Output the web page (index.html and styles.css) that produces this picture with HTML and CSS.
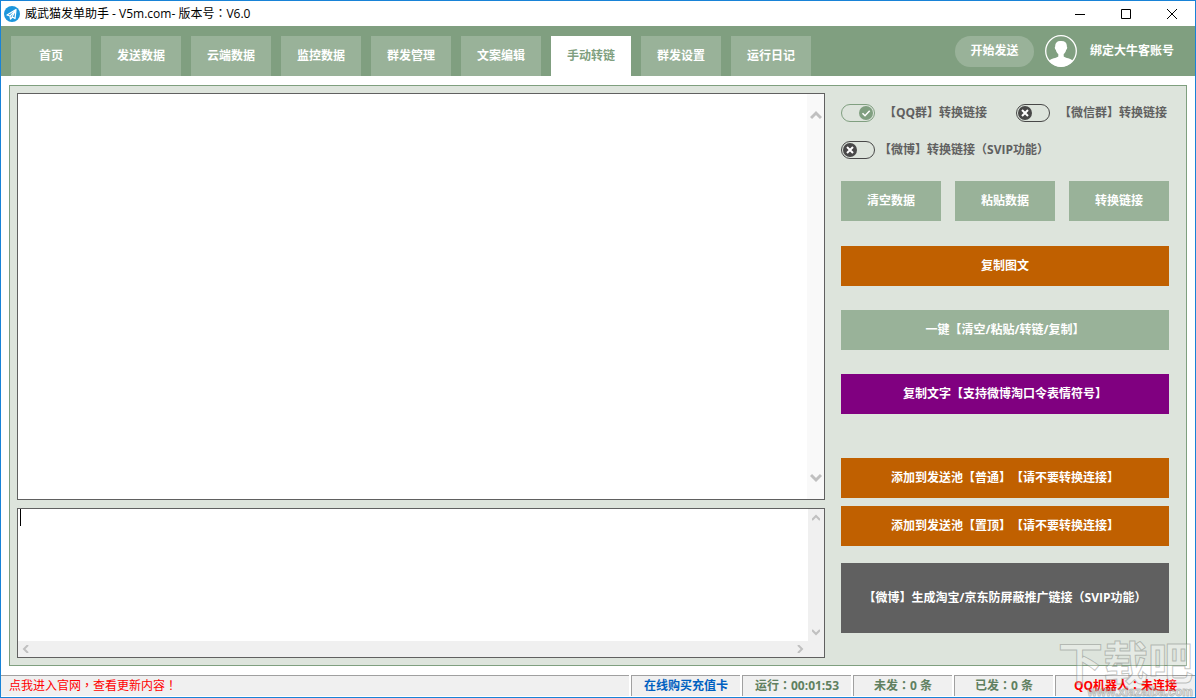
FILE: index.html
```html
<!DOCTYPE html>
<html lang="zh-CN">
<head>
<meta charset="utf-8">
<title>威武猫发单助手</title>
<link rel="stylesheet" href="styles.css">
</head>
<body>
<div class="window">
  <header class="titlebar">
    <svg class="app-icon" viewBox="0 0 16 16" aria-hidden="true">
      <circle cx="8" cy="8" r="8" fill="#1c96dc"/>
      <path d="M3 9 12 3.5 11 12.5 8.5 11 6.5 13 6 10Z" fill="none" stroke="#fff" stroke-width="1.3" stroke-linejoin="round"/>
      <path d="M6 10 11.5 4.5 8 11" fill="none" stroke="#fff" stroke-width="1.2"/>
    </svg>
    <h1 class="title">威武猫发单助手 - V5m.com- 版本号<span class="mid" lang="zh-TW">：</span>V6.0</h1>
    <div class="controls">
      <button class="control" aria-label="最小化"><svg viewBox="0 0 12 12"><path d="M1 6.5h10" /></svg></button>
      <button class="control" aria-label="最大化"><svg viewBox="0 0 12 12"><path d="M1.5 1.5h9v9h-9z" /></svg></button>
      <button class="control" aria-label="关闭"><svg viewBox="0 0 12 12"><path d="M1 1l10 10M11 1 1 11" /></svg></button>
    </div>
  </header>

  <div class="toolbar">
    <nav class="tabs" role="tablist">
      <button class="tab" role="tab">首页</button>
      <button class="tab" role="tab">发送数据</button>
      <button class="tab" role="tab">云端数据</button>
      <button class="tab" role="tab">监控数据</button>
      <button class="tab" role="tab">群发管理</button>
      <button class="tab" role="tab">文案编辑</button>
      <button class="tab tab-active" role="tab" aria-selected="true">手动转链</button>
      <button class="tab" role="tab">群发设置</button>
      <button class="tab" role="tab">运行日记</button>
    </nav>
    <div class="account">
      <button class="start">开始发送</button>
      <svg class="avatar" viewBox="0 0 32 32" aria-hidden="true">
        <circle cx="16" cy="16" r="15.3" fill="none" stroke="#fff" stroke-width="1.3"/>
        <path d="M16 6C12.300 5.500 10 7.800 10.200 11.500 9.400 12 9.900 14.500 10.900 14.900 11.300 17 12.400 18.300 13.300 19V21.500C11.500 23.300 6 23 4.200 26 10 33.500 22 33.500 27.800 26 26 23 20.500 23.300 18.700 21.500V19C19.600 18.300 20.700 17 21.100 14.900 22.100 14.500 22.600 12 21.800 11.500 22.200 8 20 5.800 16 6Z" fill="#fff"/>
      </svg>
      <a class="bind" href="#">绑定大牛客账号</a>
    </div>
  </div>

  <main class="panel">
    <div class="editors">
      <div class="editor editor-main">
        <textarea class="editor-text" aria-label="转链内容"></textarea>
        <div class="scroll scroll-light">
          <button class="arrow" aria-label="向上"><svg class="chev" viewBox="0 0 12 12"><path d="M1 9 6 4l5 5"/></svg></button>
          <button class="arrow" aria-label="向下"><svg class="chev" viewBox="0 0 12 12"><path d="M1 3l5 5 5-5"/></svg></button>
        </div>
      </div>
      <div class="editor editor-sub">
        <textarea class="editor-text" aria-label="转换结果"></textarea>
        <span class="caret"></span>
        <div class="scroll">
          <button class="arrow" aria-label="向上"><svg class="chev-small" viewBox="0 0 8 8"><path d="M0 6l4-4 4 4"/></svg></button>
          <button class="arrow" aria-label="向下"><svg class="chev-small" viewBox="0 0 8 8"><path d="M0 2l4 4 4-4"/></svg></button>
        </div>
        <div class="scroll-h">
          <button class="arrow" aria-label="向左"><svg class="chev-small" viewBox="0 0 8 8"><path d="M6 0 2 4l4 4"/></svg></button>
          <button class="arrow" aria-label="向右"><svg class="chev-small" viewBox="0 0 8 8"><path d="M2 0l4 4-4 4"/></svg></button>
        </div>
        <div class="corner"></div>
      </div>
    </div>

    <aside class="side">
      <div class="options">
        <div class="option-row">
          <label class="option option-wide">
            <span class="switch switch-on">
              <input class="switch-box" type="checkbox" checked>
              <svg class="knob" viewBox="0 0 14 14"><circle cx="7" cy="7" r="7"/><path d="M3.500 7.200 6 9.700l4.700-5"/></svg>
            </span>【QQ群】转换链接
          </label>
          <label class="option option-wide">
            <span class="switch">
              <input class="switch-box" type="checkbox">
              <svg class="knob" viewBox="0 0 14 14"><circle cx="7" cy="7" r="7"/><path class="cross" d="M4 4l6 6M10 4l-6 6"/></svg>
            </span>【微信群】转换链接
          </label>
        </div>
        <div class="option-row">
          <label class="option">
            <span class="switch">
              <input class="switch-box" type="checkbox">
              <svg class="knob" viewBox="0 0 14 14"><circle cx="7" cy="7" r="7"/><path class="cross" d="M4 4l6 6M10 4l-6 6"/></svg>
            </span>
            <span>【微博】转换链接<span class="mid" lang="zh-TW">（</span>SVIP功能<span class="mid" lang="zh-TW">）</span></span>
          </label>
        </div>
      </div>
      <div class="trio">
        <button class="btn">清空数据</button>
        <button class="btn">粘贴数据</button>
        <button class="btn">转换链接</button>
      </div>
      <div class="copying">
        <button class="btn btn-orange">复制图文</button>
        <button class="btn">一键【清空/粘贴/转链/复制】</button>
        <button class="btn btn-purple">复制文字【支持微博淘口令表情符号】</button>
      </div>
      <div class="pool">
        <button class="btn btn-orange">添加到发送池【普通】【请不要转换连接】</button>
        <button class="btn btn-orange">添加到发送池【置顶】【请不要转换连接】</button>
      </div>
      <button class="btn btn-tall">【微博】生成淘宝/京东防屏蔽推广链接<span class="mid" lang="zh-TW">（</span>SVIP功能<span class="mid" lang="zh-TW">）</span></button>
    </aside>
  </main>

  <footer class="status">
    <a class="cell cell-news" href="#">点我进入官网<span class="mid" lang="zh-TW">，</span>查看更新内容<span class="mid" lang="zh-TW">！</span></a>
    <a class="cell cell-buy" href="#">在线购买充值卡</a>
    <span class="cell">运行<span class="mid" lang="zh-TW">：</span>00:01:53</span>
    <span class="cell cell-count">未发<span class="mid" lang="zh-TW">：</span>0 条</span>
    <span class="cell cell-count">已发<span class="mid" lang="zh-TW">：</span>0 条</span>
    <span class="cell cell-robot">QQ机器人<span class="mid" lang="zh-TW">：</span>未连接</span>
  </footer>

  <div class="watermark" aria-hidden="true">
    <span class="mark-name">下载吧</span>
    <span class="mark-url">www.xiazaiba.com</span>
  </div>
</div>
</body>
</html>
```
FILE: styles.css
```css
* {
  box-sizing: border-box;
}

body {
  margin: 0;
  font-family: "Open Sans", "Noto Sans CJK SC", sans-serif;
  font-size: 12px;
  line-height: 16px;
  color: #606060;
  text-spacing-trim: space-all;
}

button,
textarea {
  margin: 0;
  padding: 0;
  border: 0;
  border-radius: 0;
  background: none;
  font: inherit;
  color: inherit;
}

button {
  text-spacing-trim: space-all;
}

a {
  text-decoration: none;
}

/* full-width punctuation centred in its cell */
.mid {
  font-family: "Noto Sans CJK TC", sans-serif;
  line-height: 1;
}

.window {
  position: relative;
  display: flex;
  flex-direction: column;
  min-height: 100vh;
  border: 1px solid #1883d7;
  background: #fff;
  overflow: hidden;
}

/* title bar */
.titlebar {
  display: flex;
  align-items: center;
  height: 25px;
  padding-left: 3px;
  color: #000;
}

.app-icon {
  width: 16px;
  height: 16px;
  margin-right: 5px;
}

.title {
  flex: 1;
  margin: 0;
  font-size: 12px;
  font-weight: 400;
}

.controls {
  display: flex;
}

.control {
  display: grid;
  place-items: center;
  width: 46px;
  height: 25px;
}

.control svg {
  width: 12px;
  height: 12px;
  fill: none;
  stroke: #000;
}

/* green toolbar */
.toolbar {
  display: flex;
  justify-content: space-between;
  height: 50px;
  padding: 0 21px 0 10px;
  background: #809f80;
  color: #fff;
  font-weight: 700;
}

.tabs {
  display: flex;
  align-items: flex-end;
  gap: 10px;
}

.tab {
  width: 80px;
  height: 40px;
  background: #99b299;
}

.tab-active {
  background: #fff;
  color: #809f80;
}

.account {
  display: flex;
  align-items: center;
}

.start {
  width: 79px;
  height: 31px;
  margin-right: 11px;
  border-radius: 16px;
  background: #99b299;
}

.avatar {
  width: 32px;
  height: 32px;
  margin-right: 13px;
}

.bind {
  color: #fff;
}

/* main panel */
.panel {
  flex: 1;
  display: flex;
  gap: 16px;
  margin: 9px 8px;
  padding: 7px 17px 7px 7px;
  border: 1px solid #7f9f7f;
  background: #dde4dc;
}

.editors {
  flex: 1;
  display: flex;
  flex-direction: column;
  gap: 8px;
}

.editor {
  position: relative;
  display: grid;
  grid-template-columns: 1fr 16px;
  border: 1px solid #606060;
  background: #fff;
}

.editor-main {
  flex: 1;
  grid-template-columns: 1fr 17px;
}

.editor-sub {
  height: 150px;
  grid-template-rows: 1fr 16px;
}

.editor-text {
  width: 100%;
  height: 100%;
  padding: 0 2px;
  resize: none;
  outline: 0;
}

.caret {
  position: absolute;
  left: 2px;
  top: 0;
  width: 1px;
  height: 17px;
  background: #000;
}

.scroll,
.scroll-h {
  display: flex;
  justify-content: space-between;
  background: #f0f0f0;
}

.scroll {
  flex-direction: column;
}

.scroll-light {
  padding: 12px 0;
  background: #f9f9f9;
}

.corner {
  background: #f0f0f0;
}

.arrow {
  display: grid;
  place-items: center;
  height: 18px;
}

.scroll-h .arrow {
  width: 16px;
  height: 16px;
}

.chev,
.chev-small {
  fill: none;
  stroke: #c0c0c0;
}

.chev {
  width: 12px;
  height: 12px;
  stroke-width: 3;
}

.chev-small {
  width: 8px;
  height: 8px;
  stroke-width: 2;
}

/* right column */
.side {
  width: 328px;
  padding-top: 1px;
  font-weight: 700;
}

.options {
  margin-bottom: 13px;
}

.option-row {
  display: flex;
  justify-content: space-between;
  height: 37px;
  padding-right: 2px;
}

.option {
  display: flex;
  align-items: center;
  gap: 4px;
  white-space: nowrap;
}

.option-wide {
  gap: 9px;
}

.switch {
  display: grid;
  align-items: center;
  width: 34px;
  height: 18px;
  color: #484848;
}

.switch-on {
  justify-items: end;
  color: #809f80;
}

.switch-box,
.knob {
  grid-area: 1 / 1;
}

.switch-box {
  appearance: none;
  width: 34px;
  height: 18px;
  margin: 0;
  border: 1px solid currentColor;
  border-radius: 9px;
  color: inherit;
}

.knob {
  width: 14px;
  height: 14px;
  margin: 0 2px;
  fill: currentColor;
  pointer-events: none;
}

.knob path {
  fill: none;
  stroke: #fff;
  stroke-width: 1.5;
}

.knob .cross {
  stroke-width: 2;
}

.trio {
  display: grid;
  grid-template-columns: repeat(3, 1fr);
  gap: 14px;
  margin-bottom: 25px;
}

.btn {
  width: 100%;
  height: 40px;
  background: #99b299;
  color: #fff;
}

.btn-orange {
  background: #c06000;
}

.btn-purple {
  background: #800080;
}

.btn-tall {
  height: 70px;
  background: #606060;
}

.copying {
  display: grid;
  gap: 24px;
  margin-bottom: 44px;
}

.pool {
  display: grid;
  gap: 8px;
  margin-bottom: 17px;
}

/* status bar */
.status {
  display: flex;
  gap: 2px;
  padding-bottom: 1px;
  font-weight: 700;
  color: #608060;
}

.cell {
  width: 109px;
  height: 21px;
  padding-top: 2px;
  border-top: 1px solid #a0a0a0;
  border-left: 1px solid #a0a0a0;
  background: #f0f0f0;
  text-align: center;
  white-space: nowrap;
}

.cell-news {
  flex: 1;
  padding-left: 8px;
  border-left: 0;
  text-align: left;
  font-weight: 400;
  color: #f00;
}

.cell-buy {
  color: #0060c0;
}

.cell-count {
  width: 99px;
}

.cell-robot {
  width: 140px;
  color: #f00;
}

/* site mark laid over the corner */
.watermark {
  position: absolute;
  right: 2px;
  bottom: -1px;
  display: flex;
  flex-direction: column;
  align-items: flex-end;
  font-weight: 700;
  color: rgba(255, 255, 255, 0.25);
  -webkit-text-stroke: 1px rgba(120, 125, 120, 0.45);
  pointer-events: none;
}

.mark-name {
  font-size: 45px;
  line-height: 46px;
}

.mark-url {
  font-family: "Liberation Sans", sans-serif;
  font-size: 12px;
  line-height: 12px;
}
```
